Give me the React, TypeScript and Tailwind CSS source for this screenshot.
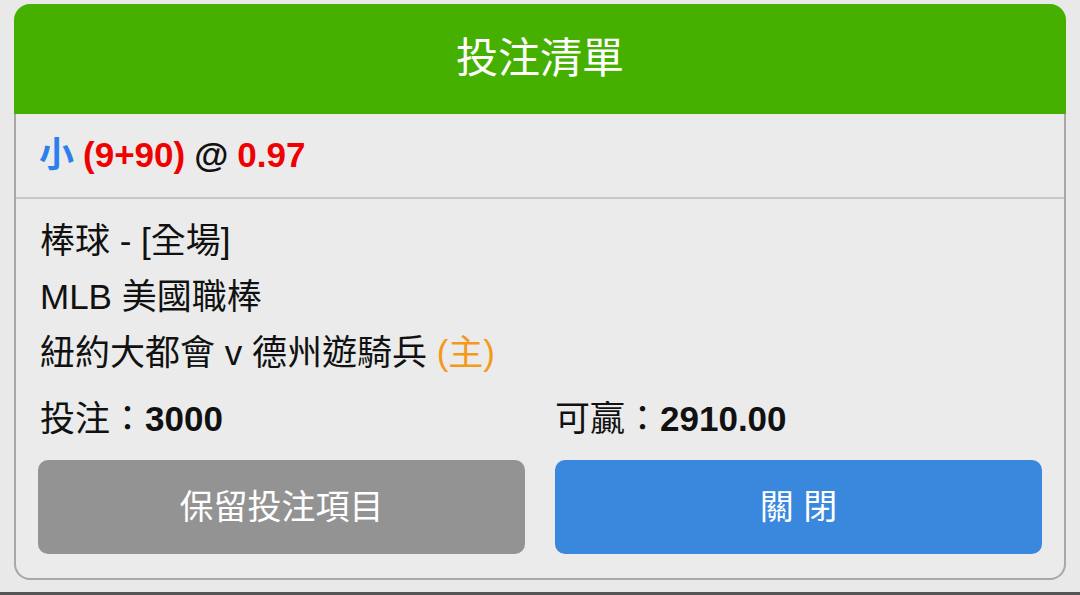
import React from "react";

const font = { fontFamily: '"Liberation Sans", "Noto Sans CJK TC", sans-serif' };

const BetSlip: React.FC = () => {
  return (
    <div className="w-[1080px] h-[595px] bg-[#e9e9e9] flex flex-col" style={font}>
      <div className="px-[14px] pt-[4px]">
        <div className="rounded-t-[16px] bg-[#46b000] h-[110px] flex items-center justify-center">
          <h1 className="text-[42px] text-white leading-none">投注清單</h1>
        </div>
        <div className="bg-[#ebebeb] border-x-2 border-b-2 border-[#a8a8a8] rounded-b-[16px]">
          <div className="h-[85px] flex items-center px-[23px] border-b-2 border-[#c8c8c8] text-[35px] font-bold">
            <span className="text-[#2b80ee]">小</span>
            <span className="text-[#f00000] ml-[9px]">(9+90)</span>
            <span className="text-[#111] ml-[9px]">@</span>
            <span className="text-[#f00000] ml-[9px]">0.97</span>
          </div>
          <div className="px-[22px] pt-[14px] pb-[24px] text-[35px] text-[#111]">
            <p className="leading-[56px] pl-[2px]">棒球 - [全場]</p>
            <p className="leading-[56px] pl-[2px]">MLB 美國職棒</p>
            <p className="leading-[56px] pl-[2px]">
              紐約大都會 v 德州遊騎兵 <span className="text-[#f39a1d]">(主)</span>
            </p>
            <div className="grid grid-cols-2 gap-[30px] mt-[10px] leading-[56px]">
              <p className="pl-[2px]">
                投注：<span className="font-bold">3000</span>
              </p>
              <p>
                可贏：<span className="font-bold">2910.00</span>
              </p>
            </div>
            <div className="grid grid-cols-2 gap-[30px] mt-[13px]">
              <button className="h-[94px] rounded-[10px] bg-[#939393] text-white text-[34px]">
                保留投注項目
              </button>
              <button className="h-[94px] rounded-[10px] bg-[#3a87de] text-white text-[34px]">
                關 閉
              </button>
            </div>
          </div>
        </div>
      </div>
      <div className="flex-1" />
      <div className="h-[3px] bg-[#555]" />
    </div>
  );
};

export default function App() {
  return <BetSlip />;
}
